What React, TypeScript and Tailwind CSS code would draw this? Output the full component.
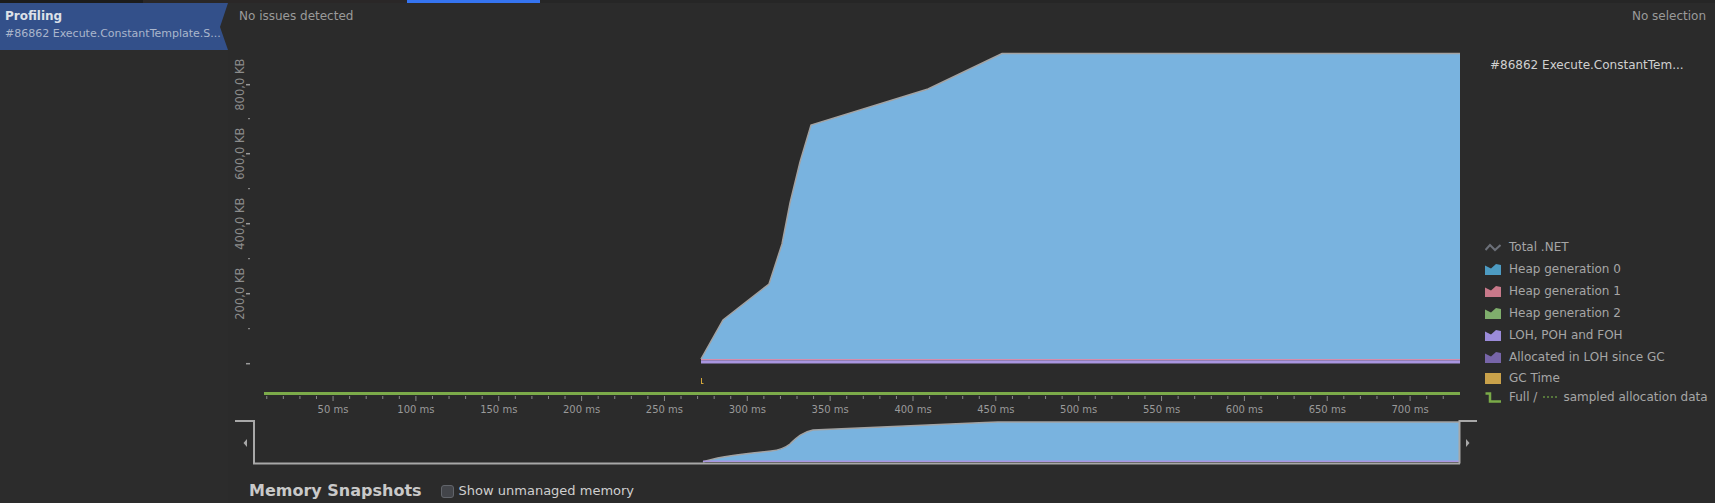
const xOf = (ms: number) => 250.2 + ms * 1.657

const xTicks = Array.from({ length: 72 }, (_, i) => (i + 1) * 10)
const xLabels = Array.from({ length: 14 }, (_, i) => (i + 1) * 50)

const yMajor = [
  { y: 83.7, label: '800,0 KB' },
  { y: 152.7, label: '600,0 KB' },
  { y: 222.7, label: '400,0 KB' },
  { y: 292.7, label: '200,0 KB' },
  { y: 362.7, label: '' },
]
const yMinor = [117.7, 187.7, 257.7, 327.7]

const mainLine = '701,358 723,319 769,283 782,243 790,202 800,161 811,124 928,88 1002,52.5 1460,52.5'

const areaIcon = (color: string) => (
  <svg width={16} height={11} viewBox="0 0 16 11">
    <polygon points="0,1.5 6,4.5 11,0 16,1 16,11 0,11" fill={color} />
  </svg>
)

const legend = [
  {
    label: 'Total .NET',
    icon: (
      <svg width={16} height={11} viewBox="0 0 16 11">
        <polyline points="0.5,8 5,3 10,8 15.5,3" fill="none" stroke="#6c7079" strokeWidth={2} />
      </svg>
    ),
  },
  { label: 'Heap generation 0', icon: areaIcon('#4d9bc2') },
  { label: 'Heap generation 1', icon: areaIcon('#c8798a') },
  { label: 'Heap generation 2', icon: areaIcon('#7fae6c') },
  { label: 'LOH, POH and FOH', icon: areaIcon('#9b8bd9') },
  { label: 'Allocated in LOH since GC', icon: areaIcon('#7765a8') },
]

function Chart() {
  return (
    <svg width={1252} height={443} viewBox="228 27 1252 443" className="shrink-0 font-['DejaVu_Sans',sans-serif]">
      {/* y axis */}
      {yMajor.map(({ y, label }) => (
        <g key={y}>
          <rect x={246} y={y - 0.75} width={4} height={1.5} fill="#9a9a9a" />
          {label && (
            <text
              transform={`translate(239.5,${y}) rotate(-90)`}
              textAnchor="middle"
              dominantBaseline="central"
              fontSize={11.5}
              fill="#8c8c8c"
            >
              {label}
            </text>
          )}
        </g>
      ))}
      {yMinor.map((y) => (
        <rect key={y} x={248} y={y - 0.5} width={2} height={1} fill="#9a9a9a" />
      ))}

      {/* main area */}
      <polygon points={`${mainLine} 1460,358`} fill="#79b3df" />
      <polyline points={mainLine} fill="none" stroke="#a3a3a3" strokeWidth={1.5} />
      <rect x={701} y={358} width={759} height={1.3} fill="#d68cab" />
      <rect x={701} y={359.3} width={759} height={3.2} fill="#a996e0" />

      {/* gc marker */}
      <rect x={701} y={377} width={1} height={6} fill="#d4a73a" />
      <rect x={701} y={382} width={2.5} height={1} fill="#d4a73a" />

      {/* time axis */}
      <rect x={264} y={391} width={1196} height={3} fill="#7cab4a" />
      {xTicks.map((ms) => (
        <rect
          key={ms}
          x={xOf(ms) - 0.5}
          y={395}
          width={1}
          height={ms % 50 === 0 ? 5 : 3}
          fill="#8a8a8a"
        />
      ))}
      {xLabels.map((ms) => (
        <text key={ms} x={xOf(ms)} y={408} textAnchor="middle" dominantBaseline="central" fontSize={10} fill="#9a9a9a">
          {ms} ms
        </text>
      ))}

      {/* overview */}
      <path
        d="M703,461 C715,456 740,453 771,450 C780,449 785,447 790,443 C797,436 803,431 813,429 L985,421.5 L998,421 L1459,421 L1459,461 Z"
        fill="#79b3df"
      />
      <path
        d="M703,461 C715,456 740,453 771,450 C780,449 785,447 790,443 C797,436 803,431 813,429 L985,421.5 L998,421 L1459,421"
        fill="none"
        stroke="#a3a3a3"
        strokeWidth={1.5}
      />
      <rect x={703} y={459.5} width={756} height={1.5} fill="#a996e0" />
      <polyline points="235,420 254,420 254,462.5 1460,462.5" fill="none" stroke="#a8a8a8" strokeWidth={2} />
      <polyline points="1459.5,462.5 1459.5,420 1477,420" fill="none" stroke="#a8a8a8" strokeWidth={2} />
      <polygon points="243.5,442 247,438 247,446" fill="#a8a8a8" />
      <polygon points="1466,438 1466,446 1469.5,442" fill="#a8a8a8" />
    </svg>
  )
}

export default function App() {
  return (
    <div className="w-[1715px] h-[503px] overflow-hidden bg-[#2b2b2b] flex flex-col font-['DejaVu_Sans',sans-serif]">
      <div className="h-[3px] shrink-0 flex bg-[#262626]">
        <div className="w-[143px] bg-[#1c1c1c]" />
        <div className="w-[264px] bg-[#2a2727]" />
        <div className="w-[133px] bg-[#3574f0]" />
      </div>

      <div className="flex flex-1 min-h-0">
        <aside className="w-[228px] shrink-0 bg-[#2c2c2c]">
          <div className="relative h-[47px] bg-[#33508a] pl-[5px] pt-[5px]">
            <p className="text-[12px] leading-[16px] font-bold text-[#dde1e8]">Profiling</p>
            <p className="mt-[3px] text-[11px] leading-[14px] text-[#aab6cc] whitespace-nowrap">
              #86862 Execute.ConstantTemplate.S...
            </p>
            <svg className="absolute right-0 top-0" width={8} height={47} viewBox="0 0 8 47">
              <polygon points="8,0 0,24 8,47" fill="#2b2b2b" />
            </svg>
          </div>
        </aside>

        <main className="flex-1 min-w-0 flex flex-col">
          <div className="h-[25px] shrink-0 flex items-center justify-between pl-[11px] pr-[9px] text-[12px] text-[#9a9a9a]">
            <span>No issues detected</span>
            <span>No selection</span>
          </div>

          <div className="flex h-[442px] shrink-0">
            <Chart />
            <div className="flex-1 min-w-0 flex flex-col">
              <p className="mt-[29px] pl-[10px] h-[16px] leading-[16px] text-[12px] text-[#d0d0d0] whitespace-nowrap">
                #86862 Execute.ConstantTem...
              </p>
              <div className="mt-[163px] pl-[5px] flex flex-col text-[12px] text-[#a6a6a6]">
                {legend.map(({ label, icon }) => (
                  <div key={label} className="h-[22px] flex items-center gap-[8px] whitespace-nowrap">
                    {icon}
                    <span>{label}</span>
                  </div>
                ))}
                <div className="h-[20px] flex items-center gap-[8px] whitespace-nowrap">
                  <span className="w-[16px] h-[11px] bg-[#c9a14a]" />
                  <span>GC Time</span>
                </div>
                <div className="h-[18px] flex items-center gap-[8px] whitespace-nowrap">
                  <svg width={16} height={11} viewBox="0 0 16 11">
                    <polyline points="0.5,1.5 5,1.5 5,9.5 16,9.5" fill="none" stroke="#7aaa48" strokeWidth={2.5} />
                  </svg>
                  <span className="flex items-center">
                    Full /
                    <svg className="ml-[6px] mr-[5px]" width={15} height={4} viewBox="0 0 15 4">
                      <rect x={0} y={1} width={2} height={2} fill="#56773b" />
                      <rect x={4} y={1} width={2} height={2} fill="#56773b" />
                      <rect x={8} y={1} width={2} height={2} fill="#56773b" />
                      <rect x={12} y={1} width={2} height={2} fill="#56773b" />
                    </svg>
                    sampled allocation data
                  </span>
                </div>
              </div>
            </div>
          </div>

          <div className="h-[33px] shrink-0 pt-[9px] pl-[21px] flex items-center">
            <span className="text-[16px] font-bold text-[#c9c9c9]">Memory Snapshots</span>
            <span className="ml-[19px] w-[13px] h-[13px] rounded-[3px] bg-[#43454a] border border-[#62656b]" />
            <span className="ml-[5px] text-[13px] text-[#cfcfcf]">Show unmanaged memory</span>
          </div>
        </main>
      </div>
    </div>
  )
}
